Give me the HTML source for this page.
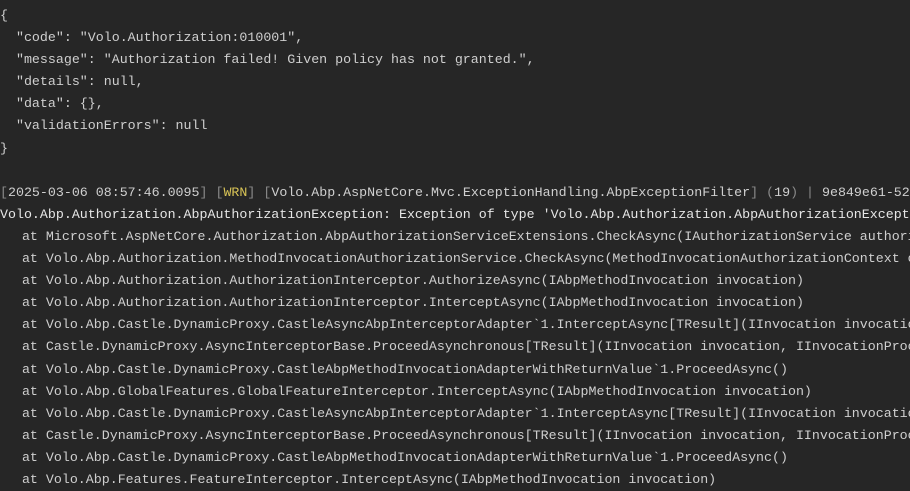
<!DOCTYPE html>
<html><head><meta charset="utf-8"><style>
html,body{margin:0;padding:0;background:#262626;width:910px;height:491px;overflow:hidden;position:relative}
pre{margin:0;position:absolute;left:0;top:5px;width:910px;overflow:hidden;font-family:"Liberation Mono",monospace;font-size:13.3px;line-height:22.1px;color:#cfcfcf;white-space:pre}
.d{color:#8a8a8a}.w{color:#d8c356}.e{color:#e6e6e6}
.a{margin-left:-2px}
</style></head><body>
<pre>{
  "code": "Volo.Authorization:010001",
  "message": "Authorization failed! Given policy has not granted.",
  "details": null,
  "data": {},
  "validationErrors": null
}

<span class="d">[</span>2025-03-06 08:57:46.0095<span class="d">]</span> <span class="d">[</span><span class="w">WRN</span><span class="d">]</span> <span class="d">[</span>Volo.Abp.AspNetCore.Mvc.ExceptionHandling.AbpExceptionFilter<span class="d">]</span> <span class="d">(</span>19<span class="d">)</span> <span class="d">|</span> 9e849e61-52
<span class="e">Volo.Abp.Authorization.AbpAuthorizationException: Exception of type 'Volo.Abp.Authorization.AbpAuthorizationException'</span>
  <span class="a"> at Microsoft.AspNetCore.Authorization.AbpAuthorizationServiceExtensions.CheckAsync(IAuthorizationService authorizationService</span>
  <span class="a"> at Volo.Abp.Authorization.MethodInvocationAuthorizationService.CheckAsync(MethodInvocationAuthorizationContext context)</span>
  <span class="a"> at Volo.Abp.Authorization.AuthorizationInterceptor.AuthorizeAsync(IAbpMethodInvocation invocation)</span>
  <span class="a"> at Volo.Abp.Authorization.AuthorizationInterceptor.InterceptAsync(IAbpMethodInvocation invocation)</span>
  <span class="a"> at Volo.Abp.Castle.DynamicProxy.CastleAsyncAbpInterceptorAdapter`1.InterceptAsync[TResult](IInvocation invocation</span>
  <span class="a"> at Castle.DynamicProxy.AsyncInterceptorBase.ProceedAsynchronous[TResult](IInvocation invocation, IInvocationProceedInfo</span>
  <span class="a"> at Volo.Abp.Castle.DynamicProxy.CastleAbpMethodInvocationAdapterWithReturnValue`1.ProceedAsync()</span>
  <span class="a"> at Volo.Abp.GlobalFeatures.GlobalFeatureInterceptor.InterceptAsync(IAbpMethodInvocation invocation)</span>
  <span class="a"> at Volo.Abp.Castle.DynamicProxy.CastleAsyncAbpInterceptorAdapter`1.InterceptAsync[TResult](IInvocation invocation</span>
  <span class="a"> at Castle.DynamicProxy.AsyncInterceptorBase.ProceedAsynchronous[TResult](IInvocation invocation, IInvocationProceedInfo</span>
  <span class="a"> at Volo.Abp.Castle.DynamicProxy.CastleAbpMethodInvocationAdapterWithReturnValue`1.ProceedAsync()</span>
  <span class="a"> at Volo.Abp.Features.FeatureInterceptor.InterceptAsync(IAbpMethodInvocation invocation)</span>
</pre>
</body></html>
